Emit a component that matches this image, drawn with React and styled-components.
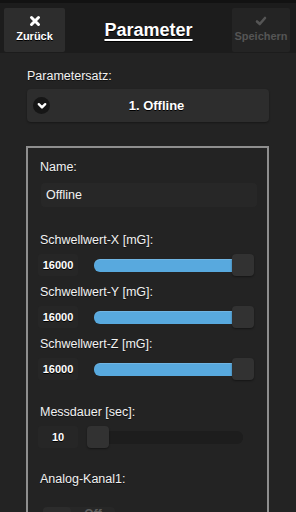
import styled, { createGlobalStyle } from 'styled-components';

const GlobalStyle = createGlobalStyle`
  html, body {
    margin: 0;
    padding: 0;
    background: #232323;
  }
  body {
    font-family: "Liberation Sans", Arial, sans-serif;
    color: #fff;
    overflow: hidden;
  }
`;

const Page = styled.div`
  width: 296px;
  height: 512px;
  overflow: hidden;
  background: #232323;
`;

const Header = styled.header`
  height: 45px;
  border-top: 3px solid #121212;
  background: #1c1c1c;
  display: flex;
  align-items: flex-start;
  padding: 5px 6px 0 4px;
`;

const HeadButton = styled.button`
  width: ${p => p.w}px;
  height: 44px;
  border: none;
  border-radius: 2px;
  background: ${p => (p.disabled ? '#242424' : '#2d2d2d')};
  color: ${p => (p.disabled ? '#555' : '#fff')};
  font-family: inherit;
  font-size: 11px;
  font-weight: bold;
  text-shadow: ${p => (p.disabled ? 'none' : '0 1px 0 #000')};
  display: flex;
  flex-direction: column;
  align-items: center;
  padding: 7px 0 0;
  gap: 3px;
  cursor: pointer;
`;

const Title = styled.h1`
  flex: 1;
  margin: 0;
  text-align: center;
  font-size: 18px;
  font-weight: bold;
  line-height: 44px;
  text-decoration: underline;
  text-decoration-thickness: 2px;
  text-underline-offset: 3px;
  text-shadow: 0 1px 0 #000;
`;

const Content = styled.main`
  padding: 15px 27px 0;
`;

const Label = styled.div`
  font-size: 12.5px;
  line-height: 16px;
  color: #f2f2f2;
  margin-top: ${p => p.mt || 0}px;
  text-shadow: 0 1px 0 #111;
`;

const Select = styled.div`
  margin-top: 5px;
  height: 33px;
  border-radius: 4px;
  background: #2d2d2d;
  box-shadow: 0 1px 2px rgba(0, 0, 0, 0.35);
  display: flex;
  align-items: center;
  padding-left: 6px;
`;

const IconCircle = styled.span`
  width: 17px;
  height: 17px;
  border-radius: 50%;
  background: #161616;
  display: flex;
  align-items: center;
  justify-content: center;
`;

const SelectText = styled.span`
  flex: 1;
  text-align: center;
  font-size: 13px;
  font-weight: bold;
  padding-right: 6px;
  text-shadow: 0 1px 0 #000;
`;

const Fieldset = styled.section`
  margin: 24px 0 0 -1px;
  width: 243px;
  box-sizing: border-box;
  border: 2px solid #8e8e8e;
  border-bottom: none;
  padding: 11px 10px 20px 12px;
  height: 380px;
`;

const TextInput = styled.div`
  margin-top: 8px;
  margin-left: 1px;
  width: 216px;
  height: 24px;
  border-radius: 4px;
  background: #272727;
  font-size: 12.5px;
  line-height: 24px;
  padding-left: 5px;
  box-sizing: border-box;
  color: #f2f2f2;
`;

const SliderRow = styled.div`
  margin-top: 6px;
  height: 22px;
  display: flex;
  align-items: center;
`;

const NumberBox = styled.div`
  width: 40px;
  height: 22px;
  margin-left: -2px;
  border-radius: 3px;
  background: #262626;
  font-size: 11px;
  font-weight: bold;
  line-height: 22px;
  text-align: center;
  color: #fff;
  text-shadow: 0 1px 0 #000;
`;

const Track = styled.div`
  position: relative;
  margin-left: 16px;
  width: 149px;
  height: 13px;
  border-radius: 6px;
  background: #1d1d1d;
`;

const Fill = styled.div`
  height: 100%;
  border-radius: 6px 0 0 6px;
  background: #58a9de;
  box-shadow: inset 0 1px 0 rgba(255, 255, 255, 0.15);
`;

const Handle = styled.div`
  position: absolute;
  top: -5px;
  width: 22px;
  height: 22px;
  margin-left: -11px;
  border-radius: 4px;
  background: #323232;
  box-shadow: 0 1px 2px rgba(0, 0, 0, 0.4);
`;

const Flip = styled.div`
  margin-top: 20px;
  margin-left: 3px;
  width: 72px;
  height: 28px;
  border-radius: 4px;
  background: #272727;
  display: flex;
`;

const FlipHandle = styled.div`
  width: 28px;
  height: 28px;
  border-radius: 4px;
  background: #2c2c2c;
`;

const FlipText = styled.span`
  flex: 1;
  text-align: center;
  font-size: 12px;
  font-weight: bold;
  line-height: 14px;
  color: #5c5c5c;
`;

const XIcon = () => (
  <svg width="12" height="12" viewBox="0 0 12 12">
    <path d="M2.5 2.5 L9.5 9.5 M9.5 2.5 L2.5 9.5" stroke="#fff" strokeWidth="3" strokeLinecap="round" />
  </svg>
);

const CheckIcon = () => (
  <svg width="12" height="12" viewBox="0 0 12 12">
    <path d="M2 6.5 L4.8 9 L10 3" stroke="#555" strokeWidth="2.6" fill="none" strokeLinecap="round" strokeLinejoin="round" />
  </svg>
);

const ChevronIcon = () => (
  <svg width="10" height="8" viewBox="0 0 10 8">
    <path d="M1.8 2.2 L5 5.4 L8.2 2.2" stroke="#fff" strokeWidth="2.4" fill="none" strokeLinecap="round" strokeLinejoin="round" />
  </svg>
);

const Slider = ({ value, pct, fill }) => (
  <SliderRow>
    <NumberBox>{value}</NumberBox>
    <Track>
      {fill && <Fill style={{ width: `${pct}%` }} />}
      <Handle style={{ left: `${pct}%` }} />
    </Track>
  </SliderRow>
);

const thresholds = ['X', 'Y', 'Z'];

export default function App() {
  return (
    <Page>
      <GlobalStyle />
      <Header>
        <HeadButton w={61}>
          <XIcon />
          Zurück
        </HeadButton>
        <Title>Parameter</Title>
        <HeadButton w={58} disabled>
          <CheckIcon />
          Speichern
        </HeadButton>
      </Header>

      <Content>
        <Label>Parametersatz:</Label>
        <Select>
          <IconCircle>
            <ChevronIcon />
          </IconCircle>
          <SelectText>1. Offline</SelectText>
        </Select>

        <Fieldset>
          <Label>Name:</Label>
          <TextInput>Offline</TextInput>

          {thresholds.map((axis, i) => (
            <div key={axis}>
              <Label mt={i === 0 ? 25 : 8}>Schwellwert-{axis} [mG]:</Label>
              <Slider value="16000" pct={100} fill />
            </div>
          ))}

          <Label mt={24}>Messdauer [sec]:</Label>
          <Slider value="10" pct={3} />

          <Label mt={23}>Analog-Kanal1:</Label>
          <Flip>
            <FlipHandle />
            <FlipText>Off</FlipText>
          </Flip>
        </Fieldset>
      </Content>
    </Page>
  );
}
